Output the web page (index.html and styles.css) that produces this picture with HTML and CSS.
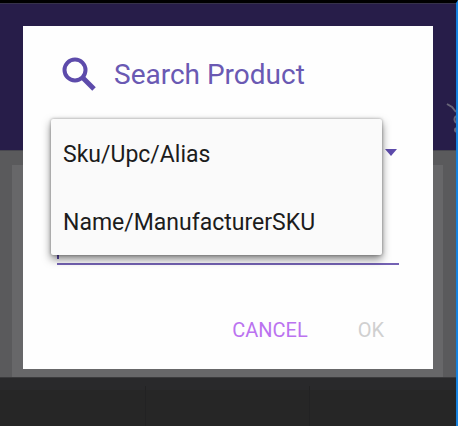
FILE: index.html
```html
<!DOCTYPE html>
<html lang="en">
    <head>
        <title>Search Product</title>
        <meta charset="UTF-8">
        <meta name="viewport" content="width=device-width, initial-scale=1.0">
        <link rel="stylesheet" href="styles.css">
    </head>
    <body>
        <div class="screen">
            <header class="appbar">
                <svg class="cart" viewBox="0 0 10 30" aria-hidden="true">
                    <path d="M1 1L6 4L10 9M10 13Q7 16 10 20M10 25Q8 27 10 29"/>
                </svg>
            </header>
            <main class="content">
                <div class="panel"></div>
            </main>
            <footer class="tabs">
                <div class="tab"></div>
                <div class="tab"></div>
                <div class="tab"></div>
            </footer>

            <!-- search dialog -->
            <form class="dialog" role="dialog" aria-labelledby="title">
                <div class="dialog-head">
                    <svg class="search-icon" viewBox="0 0 36 36" aria-hidden="true">
                        <circle cx="13" cy="13" r="10.5"/>
                        <path class="handle" d="M21 21L32 32"/>
                    </svg>
                    <h1 class="title" id="title">Search Product</h1>
                </div>
                <div class="fields">
                    <div class="spinner">
                        <select class="spinner-select" aria-label="Search by">
                            <option value=""></option>
                        </select>
                        <svg class="arrow" viewBox="0 0 14 8" aria-hidden="true"><path d="M1 0H13L7 7Z"/></svg>
                        <!-- open list of the spinner -->
                        <div class="menu">
                            <button type="button" class="menu-item">Sku/Upc/Alias</button>
                            <button type="button" class="menu-item">Name/ManufacturerSKU</button>
                        </div>
                    </div>
                    <input class="query" type="text" aria-label="Search text">
                </div>
                <div class="actions">
                    <button type="button" class="action">CANCEL</button>
                    <button type="submit" class="action" disabled>OK</button>
                </div>
            </form>
        </div>
    </body>
</html>
```

FILE: styles.css
```css
* {
    box-sizing: border-box;
}
body {
    margin: 0;
    font-family: Roboto, "Liberation Sans", sans-serif;
    background-color: #262626;
}
button, input, select {
    font-family: inherit;
    border: none;
    border-radius: 0;
    background: none;
    padding: 0;
    margin: 0;
}
.screen {
    position: relative;
    display: flex;
    flex-direction: column;
    min-height: 100vh;
    border-top: 3px solid #000;
    border-right: 2px solid #1682df;
}

/* dimmed page behind the dialog */
.appbar {
    display: flex;
    justify-content: flex-end;
    align-items: flex-end;
    height: 148px;
    padding-bottom: 17px;
    background-color: #271d49;
    border-top: 1px solid #36324a;
    border-bottom: 1px solid #48474f;
}
.cart {
    width: 10px;
    height: 30px;
    fill: none;
    stroke: #686579;
    stroke-width: 2;
}
.content {
    flex: 1;
    display: flex;
    padding: 14px 13px 0 12px;
    background-color: #5a5a5c;
}
.panel {
    flex: 1;
    background-color: #676769;
}
.tabs {
    display: grid;
    grid-template-columns: 145fr 164fr 147fr;
    height: 49px;
    padding-top: 8px;
    background: linear-gradient(#29292b 12px, #262626 12px);
    border-top: 1px solid #3a3a3c;
}
.tab + .tab {
    border-left: 1px solid #222223;
}

/* dialog */
.dialog {
    position: absolute;
    top: 23px;
    left: 23px;
    right: 23px;
    display: flex;
    flex-direction: column;
    background-color: #fefefe;
}
.dialog-head {
    display: flex;
    align-items: center;
    gap: 16px;
    height: 93px;
    padding: 5px 39px 0;
}
.search-icon {
    width: 36px;
    height: 36px;
    fill: none;
    stroke: #5d4bab;
    stroke-width: 4;
}
.handle {
    stroke-width: 5;
}
.title {
    margin: 0;
    font-size: 28px;
    font-weight: 400;
    line-height: 36px;
    color: #6a59b3;
}
.fields {
    display: flex;
    flex-direction: column;
    padding: 0 34px;
}
.spinner {
    position: relative;
    display: flex;
    align-items: center;
    height: 68px;
}
.spinner-select {
    flex: 1;
    height: 48px;
    appearance: none;
}
.arrow {
    width: 14px;
    height: 8px;
    fill: #5d4bab;
    margin-right: 1px;
}
.menu {
    position: absolute;
    top: 0;
    left: -6px;
    right: 17px;
    background-color: #fafafa;
    border-radius: 2px;
    box-shadow: 0 4px 8px rgba(0, 0, 0, 0.5), 0 0 3px rgba(0, 0, 0, 0.35);
}
.menu-item {
    display: block;
    width: 100%;
    height: 68px;
    padding: 2px 0 0 12px;
    font-size: 23px;
    text-align: left;
    color: #1c1c1c;
}
.query {
    height: 78px;
    font-size: 23px;
    border-bottom: 2px solid #7462b4;
    /* text cursor at the start of the box */
    background: linear-gradient(#5d4bab, #5d4bab) 0 66px / 2px 6px no-repeat;
}
.actions {
    display: flex;
    justify-content: flex-end;
    gap: 50px;
    padding: 46px 49px 20px;
}
.action {
    height: 38px;
    font-size: 20px;
    color: #bb73f0;
}
.action:disabled {
    color: #d0d0d0;
}
```
